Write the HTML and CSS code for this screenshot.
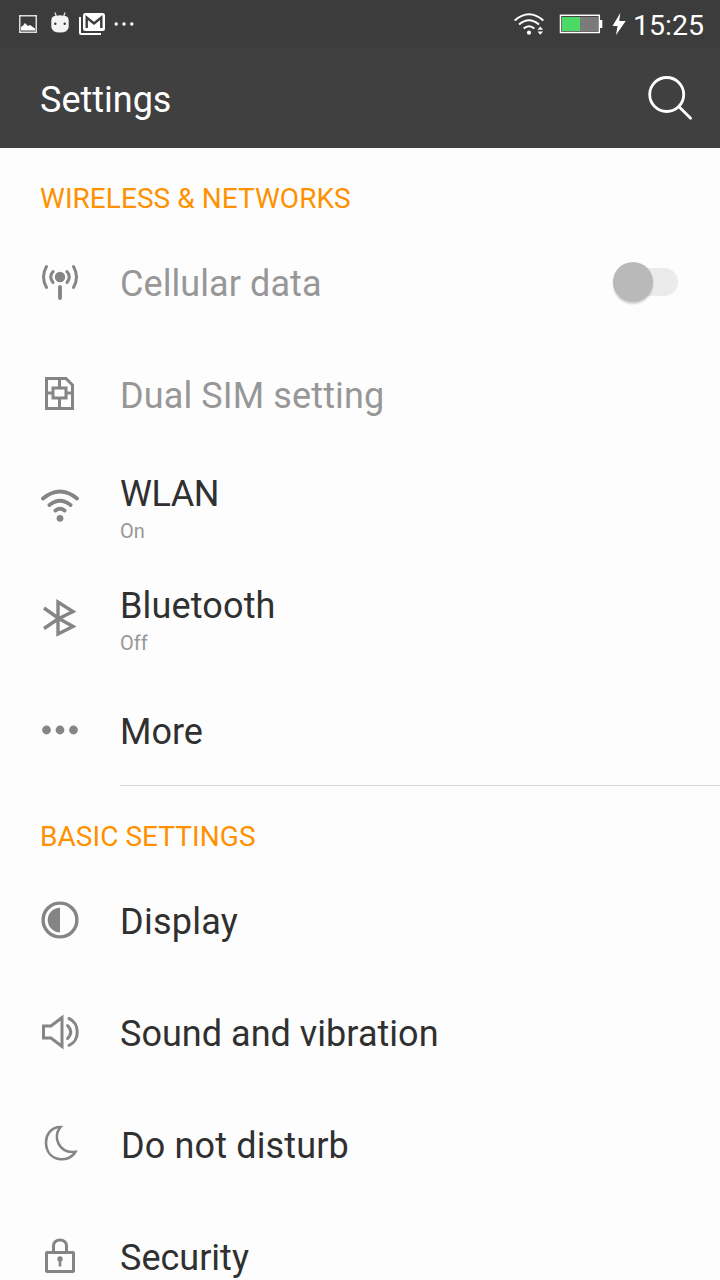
FILE: index.html
```
<!DOCTYPE html>
<html lang="en">
<head>
<meta charset="utf-8">
<title>Settings</title>
<link rel="stylesheet" href="styles.css">
</head>
<body>
<div class="statusbar">
  <svg class="status-left" width="150" height="48" viewBox="0 0 150 48">
    <rect x="19.75" y="15.75" width="16.5" height="16.5" fill="none" stroke="#ddd" stroke-width="1.5"/>
    <path d="M21 30.500V27L23 25.500L25 23L28 26L30 25L35 28.500V30.500Z" fill="#fff"/>
    <path d="M55 12.500L56.500 17M65 12.500L63.500 17" stroke="#ddd" stroke-width="1.300"/>
    <path d="M51.300 20Q52 16 55 16L60 15.300L65 16Q68 16 68.700 20V27Q68 32.500 60 32.500Q52 32.500 51.300 27Z" fill="#f4f4f4"/>
    <circle cx="55.300" cy="23.700" r="1.200" fill="#3c3c3c"/><circle cx="64.700" cy="23.700" r="1.200" fill="#3c3c3c"/>
    <path d="M80 17V33Q80 34 81 34H101" fill="none" stroke="#fff" stroke-width="2"/>
    <rect x="83" y="13" width="22" height="18" rx="2.500" fill="#fff"/>
    <path d="M86.700 28V17.500L94 23.500L101.300 17.500V28" fill="none" stroke="#3c3c3c" stroke-width="2.400"/>
    <circle cx="116.200" cy="24" r="1.700" fill="#fff"/><circle cx="124" cy="24" r="1.700" fill="#fff"/><circle cx="131.800" cy="24" r="1.700" fill="#fff"/>
  </svg>
  <div class="status-right">
    <svg width="130" height="48" viewBox="500 0 130 48">
      <g fill="none" stroke="#fff" stroke-width="2.100">
        <path d="M514.700 20.500Q529 8 543.300 20.500"/><path d="M519 24.500Q529 16 539 24.500"/><path d="M523.700 28.500Q529 24 534.300 28.500"/>
      </g>
      <circle cx="529" cy="32.700" r="2.100" fill="#fff"/>
      <path d="M537.500 29.800L540.300 26.500L543.100 29.800ZM537.500 31.500L540.300 34.800L543.100 31.500Z" fill="#fff"/>
      <rect x="560.500" y="15.300" width="38.800" height="17.200" fill="none" stroke="#fff" stroke-width="1.500"/>
      <rect x="562" y="17" width="18" height="14" fill="#4cd964"/><rect x="580" y="17" width="18" height="14" fill="#7b7b7b"/>
      <rect x="600" y="20" width="2.300" height="8" fill="#fff"/>
      <path d="M620.300 13L612.500 26H617.500L616 35L625.700 21H619.200Z" fill="#fff"/>
    </svg>
    <span class="clock">15:25</span>
  </div>
</div>
<header class="appbar">
  <h1 class="title">Settings</h1>
  <svg width="48" height="48" viewBox="646 74 48 48"><g fill="none" stroke="#fff" stroke-width="2.800"><circle cx="666.700" cy="94.500" r="17"/><path d="M679 106.700L690.600 118.300" stroke-linecap="round"/></g></svg>
</header>
<main class="list">
  <h2 class="section">WIRELESS &amp; NETWORKS</h2>
  <div class="row disabled">
    <svg class="icon" viewBox="0 0 60 60"><circle cx="30" cy="25" r="5.200" class="solid"/><path class="line round wide" d="M30 35V46"/><path class="line round thin" d="M23 19.500Q18.500 25 23 30.500M37 19.500Q41.500 25 37 30.500M16.500 14.500Q10.500 25 16.500 35.500M43.500 14.500Q49.500 25 43.500 35.500"/></svg>
    <span class="label cellular">Cellular data</span>
    <span class="switch"><span class="thumb"></span></span>
  </div>
  <div class="row disabled">
    <svg class="icon" viewBox="0 0 60 60"><path class="line thin" d="M16.500 14.500H36L42.500 21V44.500H16.500ZM23 24H36V34H23ZM29.500 14.500V24M29.500 34V44.500M16.500 29H23M36 29H42.500"/></svg>
    <span class="label sim">Dual SIM setting</span>
  </div>
  <div class="row">
    <svg class="icon" viewBox="0 0 60 60"><path class="line round wide" d="M13 22.500Q30 8.500 47 22.500M19.500 29Q30 20.500 40.500 29M25.500 34.500Q30 31 34.500 34.500"/><circle class="solid" cx="30" cy="42.300" r="3.400"/></svg>
    <div class="text"><span class="label wlan">WLAN</span><span class="note">On</span></div>
  </div>
  <div class="row">
    <svg class="icon" viewBox="0 0 60 60"><path class="line" d="M14 20L28 30L43 38.500L28 46V14L43 23.500L28 31L14 40.500"/></svg>
    <div class="text"><span class="label bluetooth">Bluetooth</span><span class="note">Off</span></div>
  </div>
  <div class="row last">
    <svg class="icon" viewBox="0 0 60 60"><g class="solid"><circle cx="16.500" cy="30" r="4.400"/><circle cx="30" cy="30" r="4.400"/><circle cx="43.500" cy="30" r="4.400"/></g></svg>
    <span class="label">More</span>
  </div>
  <h2 class="section">BASIC SETTINGS</h2>
  <div class="row">
    <svg class="icon" viewBox="0 0 60 60"><circle class="line" cx="30" cy="30" r="16.900"/><path class="solid" d="M30 17.700A12.300 12.300 0 0 0 30 42.300Z"/></svg>
    <span class="label display">Display</span>
  </div>
  <div class="row">
    <svg class="icon" viewBox="0 0 60 60"><path class="line thin" d="M13.500 24H21L32 15.500V44.500L21 36H13.500Z"/><path class="line round thin" d="M37.500 23.500Q44 30 37.500 36.500"/><path class="line round thin" d="M39 16.500C50 21 50 39 39 43.300"/></svg>
    <span class="label sound">Sound and vibration</span>
  </div>
  <div class="row">
    <svg class="icon" viewBox="0 0 60 60"><path class="line fine" d="M30.500 13C20 13 16 22 16 28C16 49 40 49 45.500 37.800C29 40 22 23 30.500 13Z"/></svg>
    <span class="label disturb">Do not disturb</span>
  </div>
  <div class="row">
    <svg class="icon" viewBox="0 0 60 60"><rect class="line thin" x="16.500" y="26.500" width="27" height="19" rx=".5"/><path class="line thin" d="M23.500 26V20C23.500 12 36.500 12 36.500 20V26"/><circle class="solid" cx="30" cy="33" r="2.700"/><path class="line fine" d="M30 33V40.500"/></svg>
    <span class="label">Security</span>
  </div>
</main>
</body>
</html>
```

FILE: styles.css
```
body {
  margin: 0;
  height: 1280px;
  overflow: hidden;
  background: #fdfdfd;
  font-family: Roboto, sans-serif;
  color: #303030;
}
svg { display: block; flex: none; }
.statusbar {
  display: flex;
  justify-content: space-between;
  height: 48px;
  background: #3c3c3c;
  color: #fff;
}
.status-right { display: flex; width: 220px; }
.clock { margin-left: 3px; font-size: 28.5px; line-height: 51px; white-space: nowrap; }
.appbar {
  display: flex;
  align-items: center;
  justify-content: space-between;
  box-sizing: border-box;
  height: 100px;
  padding: 0 26px 0 40px;
  background: #404040;
  color: #fff;
}
.title { margin: 3px 0 0; font-size: 36px; line-height: 48px; font-weight: 400; }
.section {
  margin: 0;
  padding: 23px 40px 0;
  box-sizing: border-box;
  height: 78px;
  font-size: 28px;
  line-height: 56px;
  font-weight: 400;
  letter-spacing: .05px;
  color: #ff9100;
}
.row {
  display: flex;
  align-items: center;
  box-sizing: border-box;
  height: 112px;
  padding: 0 42px 0 30px;
  position: relative;
}
.icon { width: 60px; height: 60px; margin-right: 30px; }
.label { font-size: 36px; line-height: 48px; padding-top: 3px; }
.disabled .label { color: #979797; }
.cellular { letter-spacing: .08px; }
.sim { letter-spacing: .12px; }
.wlan { letter-spacing: -.5px; }
.bluetooth { letter-spacing: .15px; }
.display { letter-spacing: .25px; }
.sound { letter-spacing: .03px; }
.disturb { letter-spacing: .15px; padding-left: 1px; }
.text { display: flex; flex-direction: column; padding-bottom: 1px; }
.note { font-size: 20px; line-height: 26px; color: #979797; }
.last::after {
  content: "";
  position: absolute;
  left: 120px;
  right: 0;
  bottom: 0;
  height: 1px;
  background: #d6d6d6;
}
.solid { fill: #858585; }
.line { fill: none; stroke: #858585; stroke-width: 3.4; }
.round { stroke-linecap: round; }
.wide { stroke-width: 3.9; }
.thin { stroke-width: 3; }
.fine { stroke-width: 2.6; }
.switch {
  display: flex;
  align-items: center;
  width: 58px;
  height: 28px;
  margin-left: auto;
  border-radius: 14px;
  background: #ebebeb;
}
.thumb {
  flex: none;
  width: 40px;
  height: 40px;
  margin-left: -7px;
  border-radius: 50%;
  background: #b9b9b9;
  box-shadow: 0 2px 2px rgba(0, 0, 0, .18);
}
```
